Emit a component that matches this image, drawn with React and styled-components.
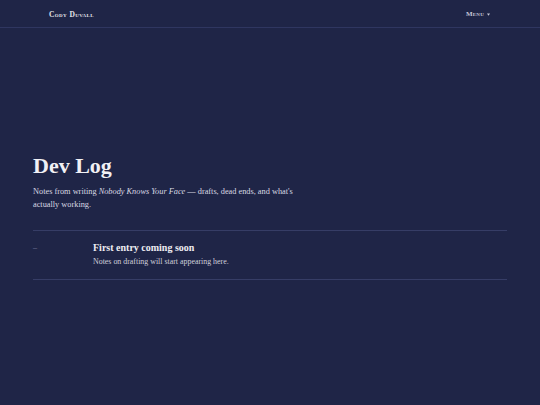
import React from "react";
import styled, { createGlobalStyle } from "styled-components";

const Global = createGlobalStyle`
  html, body { margin: 0; padding: 0; background: #1f2547; }
  body { font-family: "Liberation Serif", "DejaVu Serif", serif; color: #ecebf0; }
`;

const Page = styled.div`
  min-height: 405px;
  background: #1f2547;
`;

const Header = styled.header`
  height: 28px;
  box-sizing: border-box;
  border-bottom: 1px solid #2f3660;
  display: flex;
  align-items: center;
  justify-content: space-between;
  padding: 1px 49px 0 49px;
`;

const Brand = styled.div`
  font-variant: small-caps;
  font-weight: 700;
  font-size: 7.5px;
  letter-spacing: 0.4px;
  color: #e4e3ea;
`;

const MenuBtn = styled.div`
  font-variant: small-caps;
  font-weight: 700;
  font-size: 7px;
  letter-spacing: 0.2px;
  color: #c6c8d8;
  display: flex;
  align-items: center;
  gap: 3px;
  margin-right: 1px;
`;

const Main = styled.main`
  padding: 125px 33px 0 33px;
`;

const Title = styled.h1`
  margin: 0;
  font-size: 22px;
  font-weight: 700;
  line-height: 26px;
  color: #f1f0f4;
`;

const Lead = styled.p`
  margin: 6px 0 0;
  font-size: 8.3px;
  line-height: 13px;
  color: #d9d9e3;
  max-width: 270px;
  em { font-style: italic; }
`;

const List = styled.div`
  margin-top: 19px;
  border-top: 1px solid #363d66;
  border-bottom: 1px solid #363d66;
`;

const Entry = styled.div`
  display: grid;
  grid-template-columns: 60px 1fr;
  padding: 11px 0 12px;
`;

const Dash = styled.div`
  font-size: 8px;
  color: #7f84a3;
  line-height: 12px;
`;

const EntryTitle = styled.div`
  font-size: 10px;
  font-weight: 700;
  line-height: 12px;
  color: #eeedf2;
`;

const EntryText = styled.div`
  margin-top: 3px;
  font-size: 7.9px;
  line-height: 10px;
  color: #d0d0dc;
`;

export default function App() {
  return (
    <Page>
      <Global />
      <Header>
        <Brand>Cody Duvall</Brand>
        <MenuBtn>
          Menu
          <svg width="3" height="3" viewBox="0 0 4 3">
            <path d="M0 0 L4 0 L2 3 Z" fill="#c6c8d8" />
          </svg>
        </MenuBtn>
      </Header>
      <Main>
        <Title>Dev Log</Title>
        <Lead>
          Notes from writing <em>Nobody Knows Your Face</em> — drafts, dead ends, and what's actually working.
        </Lead>
        <List>
          <Entry>
            <Dash>–</Dash>
            <div>
              <EntryTitle>First entry coming soon</EntryTitle>
              <EntryText>Notes on drafting will start appearing here.</EntryText>
            </div>
          </Entry>
        </List>
      </Main>
    </Page>
  );
}
